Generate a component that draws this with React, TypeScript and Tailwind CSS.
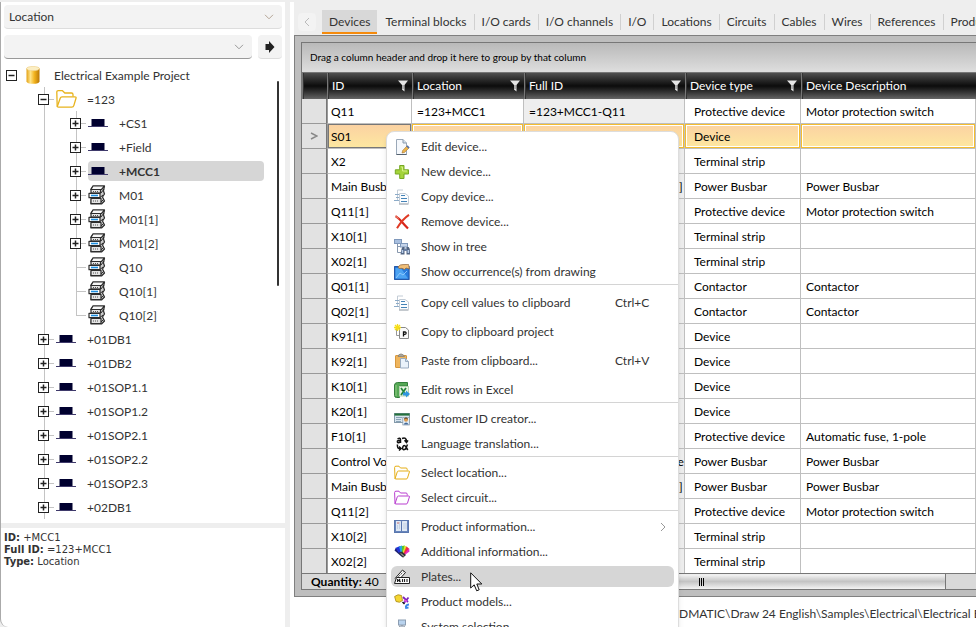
import { useState } from "react";
import type { ReactNode } from "react";

type NodeIcon = "project" | "folder" | "location" | "device";

interface TreeNode {
  label: string;
  level: number;
  icon: NodeIcon;
  state?: "open" | "closed";
  last?: boolean;
}

const treeNodes: TreeNode[] = [
  { label: "Electrical Example Project", level: 0, icon: "project", state: "open" },
  { label: "=123", level: 1, icon: "folder", state: "open" },
  { label: "+CS1", level: 2, icon: "location", state: "closed" },
  { label: "+Field", level: 2, icon: "location", state: "closed" },
  { label: "+MCC1", level: 2, icon: "location", state: "closed" },
  { label: "M01", level: 2, icon: "device", state: "closed" },
  { label: "M01[1]", level: 2, icon: "device", state: "closed" },
  { label: "M01[2]", level: 2, icon: "device", state: "closed" },
  { label: "Q10", level: 2, icon: "device" },
  { label: "Q10[1]", level: 2, icon: "device" },
  { label: "Q10[2]", level: 2, icon: "device", last: true },
  { label: "+01DB1", level: 1, icon: "location", state: "closed" },
  { label: "+01DB2", level: 1, icon: "location", state: "closed" },
  { label: "+01SOP1.1", level: 1, icon: "location", state: "closed" },
  { label: "+01SOP1.2", level: 1, icon: "location", state: "closed" },
  { label: "+01SOP2.1", level: 1, icon: "location", state: "closed" },
  { label: "+01SOP2.2", level: 1, icon: "location", state: "closed" },
  { label: "+01SOP2.3", level: 1, icon: "location", state: "closed" },
  { label: "+02DB1", level: 1, icon: "location", state: "closed" },
];

const tabs = [
  "Devices",
  "Terminal blocks",
  "I/O cards",
  "I/O channels",
  "I/O",
  "Locations",
  "Circuits",
  "Cables",
  "Wires",
  "References",
  "Products",
];

const rows = [
  { id: "Q11", type: "Protective device", description: "Motor protection switch" },
  { id: "S01", type: "Device", description: "" },
  { id: "X2", type: "Terminal strip", description: "" },
  { id: "Main Busbar[1]", type: "Power Busbar", description: "Power Busbar" },
  { id: "Q11[1]", type: "Protective device", description: "Motor protection switch" },
  { id: "X10[1]", type: "Terminal strip", description: "" },
  { id: "X02[1]", type: "Terminal strip", description: "" },
  { id: "Q01[1]", type: "Contactor", description: "Contactor" },
  { id: "Q02[1]", type: "Contactor", description: "Contactor" },
  { id: "K91[1]", type: "Device", description: "" },
  { id: "K92[1]", type: "Device", description: "" },
  { id: "K10[1]", type: "Device", description: "" },
  { id: "K20[1]", type: "Device", description: "" },
  { id: "F10[1]", type: "Protective device", description: "Automatic fuse, 1-pole" },
  { id: "Control Voltage", type: "Power Busbar", description: "Power Busbar" },
  { id: "Main Busbar[2]", type: "Power Busbar", description: "Power Busbar" },
  { id: "Q11[2]", type: "Protective device", description: "Motor protection switch" },
  { id: "X10[2]", type: "Terminal strip", description: "" },
  { id: "X02[2]", type: "Terminal strip", description: "" },
];

const Icon = ({ children }: { children: ReactNode }) => (
  <svg viewBox="0 0 16 16" className="h-4 w-4 shrink-0" aria-hidden="true">
    {children}
  </svg>
);

const FolderShape = ({ color }: { color: string }) => (
  <g fill="none" stroke={color} strokeWidth="1" strokeLinejoin="round">
    <path d="M1 13.5 L.6 2.5 Q.6 1.2 2 1.2 H5 L6.5 3 H12 Q13.2 3 13.2 4.2 V5.5" />
    <path d="M1 13.8 L3.3 6.8 Q3.6 6 4.6 6 H14.8 Q15.7 6 15.4 7 L13.5 13 Q13.2 14 12.2 14 H1.8 Q1 14 1 13.2" />
  </g>
);

const EditIcon = () => (
  <Icon>
    <path d="M2.5.5 H9 L12.5 4 V15.5 H2.5Z" fill="#f5f8fc" stroke="#9aa8b8" />
    <path d="M2.5 15.5 H12.5" stroke="#54616f" />
    <path d="M9 .5 V4 H12.5" fill="#d4e1ef" stroke="#8999ab" />
    <path d="M8 14 L8.7 11.5 L13 7 L15 9 L10.5 13.4Z" fill="#edb64e" stroke="#a8742e" strokeWidth=".6" />
    <path d="M12.4 7.5 L13.5 6.3 L15.7 8.4 L14.5 9.6Z" fill="#526da5" />
  </Icon>
);

const PlusIcon = () => (
  <Icon>
    <path d="M5.7 1.5 H10 V5.8 H14.5 V10 H10 V14.5 H5.7 V10 H1.3 V5.8 H5.7Z" fill="#a4d43a" stroke="#76a824" />
    <path d="M6.8 3 H8.5 V7 H13" fill="none" stroke="#d6ef8c" />
  </Icon>
);

const CopyIcon = () => (
  <Icon>
    <path d="M3.5 11.5 V1 H9" fill="none" stroke="#c3ccd6" />
    <path d="M5.5 14.5 V4.5 H11 L14.5 7 V14.5" fill="#fbfdff" stroke="#c3ccd6" />
    <path d="M1 5.5 H5 M2 8.5 H5 M0 11.5 H5" stroke="#8cabc8" />
    <path d="M7 6.5 H11 M7 9.5 H13 M7 12.5 H13" stroke="#4483b7" />
    <path d="M5 15 H14.5" stroke="#8a949e" />
  </Icon>
);

const RemoveIcon = () => (
  <Icon>
    <path d="M1.5 2.2 Q5 4.5 8 8 T14 14.5" fill="none" stroke="#d8261a" strokeWidth="2.2" />
    <path d="M15 .8 Q8.5 5 3 14.3" fill="none" stroke="#e03a25" strokeWidth="2" />
    <path d="M1 1.8 L4.5 4.5" stroke="#f09a83" />
  </Icon>
);

const TreeIcon = () => (
  <Icon>
    <path d="M3.5 4 V13.5 H7 M3.5 7.5 H7" fill="none" stroke="#8797ad" />
    <rect x=".5" y=".5" width="7" height="4" fill="#a8bfdf" stroke="#7f98bb" />
    <rect x="6.5" y="4.5" width="7" height="3.5" fill="#c5d4ea" stroke="#7f98bb" />
    <path d="M7.5 10 L8.5 8 H10.5 V15.5 H6.5Z M15.8 10 L14.7 8 H12.5 V15.5 H16Z" fill="#536684" />
    <rect x="10" y="9.5" width="3" height="2.5" fill="#6a80a4" />
    <path d="M8.5 11 V14 M14.3 11 V14" stroke="#b7cdec" strokeWidth="1.5" />
  </Icon>
);

const DrawingIcon = () => (
  <Icon>
    <rect x=".6" y="2.6" width="14.5" height="12.8" fill="#287bdc" stroke="#174ea2" />
    <path d="M1.5 4 L7 4.3 L14 14.5 H1.5Z" fill="#4ca3f2" />
    <path d="M2 14 L6 9 L9 11 L13 7" fill="none" stroke="#9dd0ff" strokeWidth=".8" />
    <path d="M4 3 Q6 .2 9 .6 L14.5 .4 L15.5 5 L12 4 L10.5 5.5 L8 4.3 L5 4.5Z" fill="#f0be77" stroke="#8d6238" strokeWidth=".7" />
  </Icon>
);

const ProjectCopyIcon = () => (
  <Icon>
    <path d="M2.5 4.5 H7.5 V11.5 H2.5Z" fill="#fff" stroke="#999" />
    <path d="M5.5 3.5 H11.5 L14.5 6 V14.5 H5.5Z" fill="#fafafa" stroke="#888" />
    <path d="M9.5 12.5 V8 H11 Q12.2 8.1 12.1 9.2 Q12 10.3 10.8 10.3 H9.5" fill="none" stroke="#111" strokeWidth="1.3" />
    <path d="M3.5 0 V7 M0 3.5 H7 M1 1 L6 6 M6 1 L1 6" stroke="#f6de18" strokeWidth="1.3" />
  </Icon>
);

const PasteIcon = () => (
  <Icon>
    <rect x="1.5" y="2.5" width="11" height="12" rx=".5" fill="#efb55d" stroke="#d6973f" />
    <path d="M4 3.5 L5 1.5 H6 Q7 0 8 1.5 H9 L10.5 3.5Z" fill="#aaa69b" stroke="#817d74" strokeWidth=".7" />
    <path d="M6.5 5.5 H11.5 L14.5 8.5 V15 H6.5Z" fill="#e9f2fb" stroke="#99abc0" />
    <path d="M11.5 5.5 V8.5 H14.5" fill="#c5d8ea" stroke="#99abc0" />
  </Icon>
);

const ExcelIcon = () => (
  <Icon>
    <path d="M.5 3 Q.8.5 3.5 .5 H13.5 V4 H5.5 V15.5 H2.5 Q.5 15.5 .5 13.5Z" fill="#55a855" stroke="#327d3b" />
    <path d="M2 3 V14" stroke="#93cc85" />
    <rect x="5.5" y="4.5" width="9" height="9.5" fill="#eaf5e4" stroke="#b5d3b0" />
    <path d="M7 6 L12 13 M12 6 L7 13" stroke="#24853b" strokeWidth="1.8" />
    <path d="M9 10.5 H12 V8.5 L16 12 L12 15.5 V13.5 H9Z" fill="#2f95e0" />
  </Icon>
);

const CustomerIcon = () => (
  <Icon>
    <rect x=".5" y="2.5" width="15" height="9" fill="#d8e5ee" stroke="#849aaa" />
    <path d="M.5 3.5 H15.5" stroke="#25713c" strokeWidth="2.2" />
    <path d="M2 6.5 H8 M2 8.5 H7 M2 10.5 H7" stroke="#7592a8" strokeWidth=".8" />
    <rect x="8.8" y="6.5" width="6.7" height="7.5" fill="#e3edf6" stroke="#8799a9" strokeWidth=".7" />
    <circle cx="12" cy="8.8" r="2" fill="#dc9a4c" />
    <path d="M9.5 13.5 Q12 9.5 14.8 13.5Z" fill="#456b99" />
    <path d="M10.2 8 Q12 5.5 13.8 8" fill="none" stroke="#4c321d" />
  </Icon>
);

const LanguageIcon = () => (
  <Icon>
    <g fill="none" stroke="#111" strokeWidth="1.5">
      <path d="M3.5 3 Q6.5 1 6.5 3.7 V7 M6.3 4.5 Q3 4.3 3.4 6 Q4 7.7 6.5 5.7" />
      <path d="M8 2.5 Q12.5 .8 12.5 5.5 M10.5 4.3 L12.5 6.5 L14 4.3" />
      <path d="M3.5 8.5 Q2.7 13 6.5 12.5 M5 10.5 L7.2 12.5 L5 14.5" />
      <path d="M13.5 8.5 L11.5 13 Q8 15 8.8 11 Q10 8 12 11 L13.8 14" />
    </g>
  </Icon>
);

const BookIcon = () => (
  <Icon>
    <rect x=".5" y="1.5" width="14" height="12" fill="#6886bd" stroke="#5a77ae" />
    <path d="M2 2 H6.5 L7.5 3 L8.5 2 H13 V12 H2Z" fill="#dfe9f5" />
    <path d="M7.5 2.5 V12.5" stroke="#5a77ae" />
    <path d="M3 4 H5.5" stroke="#c66a6a" />
    <path d="M3.5 6 V10 M5.5 4 V10 M10 4 V10 M12 4 V10" stroke="#c5d2e4" />
  </Icon>
);

const FanIcon = () => (
  <Icon>
    <path d="M8 13 L.5 6.5 L2 3.5Z" fill="#1d2178" />
    <path d="M8 13 L1.5 4 L6 2Z" fill="#2031da" />
    <path d="M8 13 L5 2.5 L8 1.5Z" fill="#29a8df" />
    <path d="M8 13 L8 2 L11 1.5Z" fill="#58c62d" />
    <path d="M8 13 L10.5 1.8 L13.5 3Z" fill="#eade20" />
    <path d="M8 13 L12.5 2.5 L15.5 5Z" fill="#f02a49" />
    <path d="M8 13 L15 4.5 L15.5 7.5Z" fill="#e52bc4" />
    <path d="M4.5 9 L8 7.5 L12 11 L9 13.8Z" fill="#333" />
    <path d="M7 9.5 L10 12.5" stroke="#ccc" />
  </Icon>
);

const PlatesIcon = () => (
  <Icon>
    <path d="M1 9.5 L8.5 1 L11.5 3.5 L7 8.5" fill="#fff" stroke="#222" strokeWidth="1" />
    <path d="M3.5 8.5 L9.5 2.8" stroke="#222" strokeDasharray="1.5 1" />
    <path d="M2.5 8.5 H15.5 V14.5 H.5Z" fill="#fff" stroke="#222" />
    <path d="M3.5 10 V13 M6 10 L4.5 11.5 L6.5 13 M8.5 10 V13 M10.5 10 V13 M13 10 V13" stroke="#222" strokeWidth="1.1" />
  </Icon>
);

const ModelsIcon = () => (
  <Icon>
    <path d="M.6 2.5 Q4 -.5 7.5 1.5 L8.5 6.5 Q6 9.5 2 7.5Z" fill="#f5d632" stroke="#a88a16" strokeWidth=".8" />
    <path d="M9 3 L14 8 M10 9 L14.5 3.5" stroke="#7a22bd" strokeWidth="1.8" />
    <path d="M10 6 L13 7.5" stroke="#e152dc" strokeWidth="1.6" />
    <path d="M8.5 8 L10.5 10" stroke="#111" strokeWidth="1.5" />
    <path d="M15 10.5 Q11 11 12 14 L14.5 13.5" fill="none" stroke="#3a86e8" strokeWidth="1.8" />
  </Icon>
);

const SystemIcon = () => (
  <Icon>
    <rect x="4.5" y="1" width="7" height="5" fill="#b9d3ee" stroke="#8c9db2" />
    <path d="M8 6 V9 M3 11 V9 H13 V11" fill="none" stroke="#7b8794" />
    <rect x="5.5" y="7" width="5" height="2" fill="#ccd5df" stroke="#8995a3" strokeWidth=".7" />
    <rect x="1" y="11" width="5" height="4" fill="#a9caec" stroke="#758ba5" />
    <rect x="10" y="11" width="5" height="4" fill="#a9caec" stroke="#758ba5" />
  </Icon>
);

const menuGroups = [
  {
    loose: false,
    items: [
      { label: "Edit device...", icon: <EditIcon /> },
      { label: "New device...", icon: <PlusIcon /> },
      { label: "Copy device...", icon: <CopyIcon /> },
      { label: "Remove device...", icon: <RemoveIcon /> },
      { label: "Show in tree", icon: <TreeIcon /> },
      { label: "Show occurrence(s) from drawing", icon: <DrawingIcon /> },
    ],
  },
  {
    loose: true,
    items: [
      { label: "Copy cell values to clipboard", icon: <CopyIcon />, shortcut: "Ctrl+C" },
      { label: "Copy to clipboard project", icon: <ProjectCopyIcon /> },
      { label: "Paste from clipboard...", icon: <PasteIcon />, shortcut: "Ctrl+V" },
      { label: "Edit rows in Excel", icon: <ExcelIcon /> },
    ],
  },
  {
    loose: false,
    items: [
      { label: "Customer ID creator...", icon: <CustomerIcon /> },
      { label: "Language translation...", icon: <LanguageIcon /> },
    ],
  },
  {
    loose: false,
    items: [
      { label: "Select location...", icon: <Icon><FolderShape color="#e5ae16" /></Icon> },
      { label: "Select circuit...", icon: <Icon><FolderShape color="#b93fd0" /></Icon> },
    ],
  },
  {
    loose: false,
    items: [
      { label: "Product information...", icon: <BookIcon />, submenu: true },
      { label: "Additional information...", icon: <FanIcon /> },
      { label: "Plates...", icon: <PlatesIcon /> },
      { label: "Product models...", icon: <ModelsIcon /> },
      { label: "System selection...", icon: <SystemIcon /> },
    ],
  },
];

const Chevron = ({ color }: { color: string }) => (
  <svg viewBox="0 0 10 6" className="h-1.5 w-2.5" fill="none" stroke={color} aria-hidden="true">
    <path d="M1 .8 L5 4.8 L9 .8" />
  </svg>
);

const NodeImage = ({ icon }: { icon: NodeIcon }) => {
  if (icon === "project") {
    return (
      <svg viewBox="0 0 14 18" className="h-[18px] w-3.5" aria-hidden="true">
        <defs>
          <linearGradient id="cylinder">
            <stop offset="0" stopColor="#e3a113" />
            <stop offset=".3" stopColor="#ffe48a" />
            <stop offset=".6" stopColor="#f3b41f" />
            <stop offset="1" stopColor="#b97705" />
          </linearGradient>
        </defs>
        <path d="M.5 2.5 V15.5 Q1 17.8 7 17.8 T13.5 15.5 V2.5Z" fill="url(#cylinder)" />
        <ellipse cx="7" cy="2.6" rx="6.5" ry="2.2" fill="#fbeec4" stroke="#eac56a" strokeWidth=".5" />
      </svg>
    );
  }
  if (icon === "folder") {
    return (
      <svg viewBox="0 0 21 18" className="h-[18px] w-[21px]" fill="none" stroke="#e8b31c" strokeWidth="1.3" strokeLinejoin="round" aria-hidden="true">
        <path d="M1.2 16.5 L.8 2.2 Q.8.7 2.3.7 H6.5 L8.8 3 H15.5 Q17 3 17 4.5 V6.5" />
        <path d="M1.2 16.8 L4.2 8.2 Q4.7 6.8 6 6.8 H18.8 Q20.5 6.8 20 8.3 L17.8 15.6 Q17.4 17.2 15.8 17.2 H2.4 Q1.2 17.2 1.2 16" />
      </svg>
    );
  }
  if (icon === "location") {
    return (
      <svg viewBox="0 0 20 10" className="h-2.5 w-5" aria-hidden="true">
        <rect x="3.5" y="1" width="13" height="7.5" fill="#00002f" />
        <path d="M0 8.5 H20" stroke="#3f3a6b" />
      </svg>
    );
  }
  return (
    <svg viewBox="0 0 18 20" className="h-5 w-[18px]" aria-hidden="true">
      <g fill="#e4e4e4" stroke="#2c2c2c" strokeWidth="1.2" strokeLinejoin="round">
        <path d="M5 1 H16.5 L15.5 6 L16.5 9 L14.5 12 L16.5 16 L13.5 19 H3 L4 6 L3 4Z" fill="#ccc" />
        <path d="M3 4.5 L5 1 H16.5 L13.5 4.5Z" fill="#f6f6f6" />
        <path d="M3 4.5 H12.5 V8 H3Z" />
        <path d="M1 8.3 H12 V12.7 H1Z" fill="#fff" />
        <path d="M3 13.5 H13 V18.5 H3Z" />
      </g>
      <path d="M13 8 L16 4 M12 12.5 L15 10 M13 17 L16 14" stroke="#2c2c2c" />
      <path d="M5 6.5 H11 M5 16 H11" stroke="#555" strokeDasharray="1 1" />
      <path d="M3 10.5 H10" stroke="#1e8fe0" strokeWidth="1.6" />
    </svg>
  );
};

const TreeRow = ({ node, selected, onSelect }: { node: TreeNode; selected: boolean; onSelect: () => void }) => (
  <li className="flex h-6">
    {node.level > 0 && <span className="w-8 shrink-0" />}
    {node.level > 1 && (
      <span className="w-8 shrink-0 pl-1.5">
        <span className="block h-full border-l border-[#c4c4c4]" />
      </span>
    )}
    <span className="relative flex w-[18px] shrink-0 items-center">
      {node.level > 0 && (
        <>
          <span className={`absolute left-1.5 top-0 border-l border-[#c4c4c4] ${node.last ? "h-3" : "h-full"}`} />
          <span className="absolute left-1.5 right-0.5 top-3 border-t border-[#c4c4c4]" />
        </>
      )}
      {node.state && (
        <button
          aria-label={`${node.state === "open" ? "Collapse" : "Expand"} ${node.label}`}
          className="relative h-[11px] w-[11px] border border-[#222] bg-white"
        >
          <svg viewBox="0 0 9 9" className="block h-[9px] w-[9px]" stroke="#222" strokeWidth="1.5" aria-hidden="true">
            <path d={node.state === "open" ? "M1.5 4.5 H7.5" : "M1.5 4.5 H7.5 M4.5 1.5 V7.5"} />
          </svg>
        </button>
      )}
    </span>
    <button
      onClick={onSelect}
      className={`my-0.5 flex items-center rounded text-left ${node.level === 0 ? "" : "w-44"} ${
        selected ? "bg-[#d6d6d6] font-bold" : ""
      }`}
    >
      <span className={`flex shrink-0 items-center ${node.level === 0 ? "w-[30px] pl-0.5" : "w-[31px]"}`}>
        <NodeImage icon={node.icon} />
      </span>
      <span className="pt-px">{node.label}</span>
    </button>
  </li>
);

const FilterIcon = () => (
  <svg viewBox="0 0 10 12" className="h-3 w-2.5 shrink-0" aria-hidden="true">
    <path d="M0 .5 H10 L6.5 5 V11.5 L4 9.5 V5Z" fill="#e6e6e6" />
    <path d="M5 5 V9" stroke="#777" />
  </svg>
);

const HeaderCell = ({ label, filter = true }: { label: string; filter?: boolean }) => (
  <th className="h-[27px] border-l border-t border-[#777] p-0 text-left font-normal text-white">
    <div className="flex h-[26px] items-center justify-between border-l border-[#333] bg-linear-to-b from-[#505050] from-0% via-[#0c0c0c] via-50% to-[#666] pl-[3px] pr-1">
      {label}
      {filter && <FilterIcon />}
    </div>
  </th>
);

const App = () => {
  const [selectedNode, setSelectedNode] = useState("+MCC1");
  const [activeTab, setActiveTab] = useState("Devices");

  return (
    <div className="relative flex h-screen overflow-hidden bg-[#eee] font-[Lato,sans-serif] text-xs text-[#333]">
      {/* project tree */}
      <aside className="mt-0.5 flex w-[285px] shrink-0 flex-col rounded-bl-lg border-l border-[#aaa] bg-white">
        <div className="px-[3px] pt-[3px]">
          <div className="relative">
            <select
              aria-label="Group tree by"
              className="h-6 w-[278px] appearance-none rounded border-b border-[#ddd] bg-[#f3f3f3] px-[5px]"
            >
              <option>Location</option>
            </select>
            <span className="pointer-events-none absolute right-2 top-[9px]">
              <Chevron color="#b5a596" />
            </span>
          </div>
          <div className="mt-1.5 flex gap-1.5">
            <div className="relative grow">
              <input
                type="text"
                aria-label="Search"
                className="block h-6 w-full rounded border-b border-[#999] bg-[#f3f3f3] px-[5px]"
              />
              <button aria-label="Search history" className="absolute right-2 top-[9px]">
                <Chevron color="#999" />
              </button>
            </div>
            <button
              aria-label="Find next"
              className="flex h-6 w-6 items-center justify-center rounded border-b border-[#ddd] bg-[#f3f3f3]"
            >
              <svg viewBox="0 0 10 12" className="h-3 w-2.5" aria-hidden="true">
                <path d="M.5 3 H4 V0 L9.5 6 L4 12 V9 H.5Z" fill="#222" />
              </svg>
            </button>
          </div>
        </div>

        <div className="relative mt-1 min-h-0 grow overflow-hidden pl-[5px]">
          <ul>
            {treeNodes.map((node) => (
              <TreeRow
                key={node.label}
                node={node}
                selected={node.label === selectedNode}
                onSelect={() => setSelectedNode(node.label)}
              />
            ))}
          </ul>
          <div className="absolute right-1.5 top-[18px] h-[205px] w-0.5 rounded bg-[#333]" />
        </div>

        <div className="h-[5px] shrink-0 bg-[#eee]" />
        <div className="h-[99px] shrink-0 px-[3px] py-1 font-['DejaVu_Sans',sans-serif] text-[10px] leading-3">
          <p><b>ID:</b> +MCC1</p>
          <p><b>Full ID:</b> =123+MCC1</p>
          <p><b>Type:</b> Location</p>
        </div>
      </aside>

      <main className="ml-[5px] mt-0.5 flex min-w-0 grow flex-col bg-white pl-1">
        <nav className="flex h-[33px] shrink-0 items-end overflow-hidden bg-[#eee] pl-1">
          <button aria-label="Previous tabs" className="mb-1 flex h-[18px] w-[18px] shrink-0 items-center justify-center rounded bg-[#f3f3f3]">
            <svg viewBox="0 0 6 10" className="h-2.5 w-1.5" fill="none" stroke="#bbb" aria-hidden="true">
              <path d="M5 1 L1 5 L5 9" />
            </svg>
          </button>
          <div className="ml-1.5 flex">
            {tabs.map((tab, index) => (
              <button
                key={tab}
                onClick={() => setActiveTab(tab)}
                className={`mb-px flex h-6 items-center whitespace-nowrap border-b-2 pt-0.5 ${
                  tab === activeTab ? "border-[#f58a0b] bg-[#d8d8d8]" : "border-transparent"
                }`}
              >
                <span
                  className={`px-[7px] ${
                    index > 1 ? "border-l border-[#d0d0d0]" : index === 1 ? "border-l border-transparent" : ""
                  }`}
                >
                  {tab}
                </span>
              </button>
            ))}
          </div>
        </nav>

        {/* device grid */}
        <section className="flex min-h-0 grow flex-col overflow-hidden border-y border-l border-[#808080] bg-[#bebebe] py-1.5 pl-1.5 text-black">
          <div className="flex min-h-0 grow flex-col border-y border-l border-[#777] bg-white">
            <div className="flex h-[29px] shrink-0 items-center bg-linear-to-b from-[#b9b9b9] to-[#dedede] px-2 text-[10px]">
              Drag a column header and drop it here to group by that column
            </div>
            <div className="min-h-0 grow overflow-hidden">
              <table className="w-full table-fixed border-separate border-spacing-0">
                <colgroup>
                  <col className="w-[25px]" />
                  <col className="w-[85px]" />
                  <col className="w-[112px]" />
                  <col className="w-[161px]" />
                  <col className="w-[116px]" />
                  <col />
                </colgroup>
                <thead>
                  <tr>
                    <HeaderCell label="" filter={false} />
                    <HeaderCell label="ID" />
                    <HeaderCell label="Location" />
                    <HeaderCell label="Full ID" />
                    <HeaderCell label="Device type" />
                    <HeaderCell label="Device Description" filter={false} />
                  </tr>
                </thead>
                <tbody>
                  {rows.map((row) => {
                    const current = row.id === "S01";
                    const line = "h-[25px] overflow-hidden whitespace-nowrap border-b border-r border-[#bfbfbf] p-0";
                    const fill = current
                      ? "flex h-6 items-center border border-[#f5bd2e] bg-linear-to-b from-[#fbd2a2] to-[#fde7a0] pt-0.5 outline outline-white -outline-offset-2"
                      : "flex h-6 items-center pt-0.5";
                    const idFill = current
                      ? "flex h-6 items-center border border-[#777] bg-linear-to-b from-[#fbd2a2] to-[#fde7a0] pl-0.5 pt-0.5"
                      : "flex h-6 items-center pl-[3px] pt-0.5";
                    return (
                      <tr key={row.id}>
                        <td className="h-[25px] border-b border-r border-b-[#999] border-r-[#777] bg-[#e2e2e2] p-0">
                          {current && (
                            <svg viewBox="0 0 8 8" className="mx-auto h-2 w-2" fill="none" stroke="#888" strokeWidth="1.5" aria-hidden="true">
                              <path d="M1 1 L7 4 L1 7" />
                            </svg>
                          )}
                        </td>
                        <td className={`${line} border-l border-l-[#999]`}><div className={idFill}>{row.id}</div></td>
                        <td className={line}><div className={`${fill} pl-[5px]`}>=123+MCC1</div></td>
                        <td className={`${line} bg-[#eee]`}><div className={`${fill} pl-[5px]`}>=123+MCC1-{row.id}</div></td>
                        <td className={line}><div className={`${fill} ${current ? "pl-2" : "pl-[9px]"}`}>{row.type}</div></td>
                        <td className={line}><div className={`${fill} pl-[5px]`}>{row.description}</div></td>
                      </tr>
                    );
                  })}
                </tbody>
              </table>
            </div>
            <div className="flex h-4 shrink-0 items-stretch border-t border-[#777] bg-[#d9d9d9]">
              <div className="flex w-[120px] items-center pl-[9px]">
                <b>Quantity:</b>&nbsp;40
              </div>
              <div className="mr-[30px] flex grow items-center justify-center border-r border-[#777] bg-linear-to-b from-[#eee] from-10% via-[#c4c4c4] via-50% to-[#f4f4f4] pl-9">
                <span className="flex gap-px">
                  <span className="h-2 w-px bg-black" />
                  <span className="h-2 w-px bg-black" />
                  <span className="h-2 w-px bg-black" />
                </span>
              </div>
            </div>
          </div>
        </section>

        <footer className="flex h-[30px] shrink-0 items-center overflow-hidden whitespace-nowrap pl-[385px] pt-1">
          DMATIC\Draw 24 English\Samples\Electrical\Electrical Ex
        </footer>
      </main>

      {/* context menu */}
      <div
        role="menu"
        className="absolute left-[386px] top-[131px] w-[293px] rounded-lg border border-[#ddd] bg-white py-0.5 shadow-md"
      >
        {menuGroups.map((group, index) => (
          <div
            key={index}
            className={`flex flex-col px-1 ${index > 0 ? "border-t border-[#d4d4d4]" : ""} ${
              group.loose ? "gap-1 pt-[5px]" : index > 0 ? "pt-[3px]" : ""
            }`}
          >
            {group.items.map((item: { label: string; icon: ReactNode; shortcut?: string; submenu?: boolean }) => (
              <button
                key={item.label}
                role="menuitem"
                className={`my-0.5 flex h-[21px] items-center rounded-md pl-[3px] pr-1 text-left ${
                  item.label === "Plates..." ? "bg-[#d6d6d6]" : ""
                }`}
              >
                {item.icon}
                <span className="ml-[11px] grow">{item.label}</span>
                {item.shortcut && <span className="w-[55px]">{item.shortcut}</span>}
                {item.submenu && (
                  <svg viewBox="0 0 6 10" className="mr-1 h-2.5 w-1.5" fill="none" stroke="#999" aria-hidden="true">
                    <path d="M1 1 L5 5 L1 9" />
                  </svg>
                )}
              </button>
            ))}
          </div>
        ))}
      </div>

      <svg viewBox="0 0 13 20" className="pointer-events-none absolute left-[470px] top-[572px] h-5 w-[13px]" aria-hidden="true">
        <path d="M.7 .8 V16 L4.2 12.8 L6.7 18.8 L9.2 17.8 L6.8 12 H11.8Z" fill="#fff" stroke="#111" />
      </svg>
    </div>
  );
};

export default App;
